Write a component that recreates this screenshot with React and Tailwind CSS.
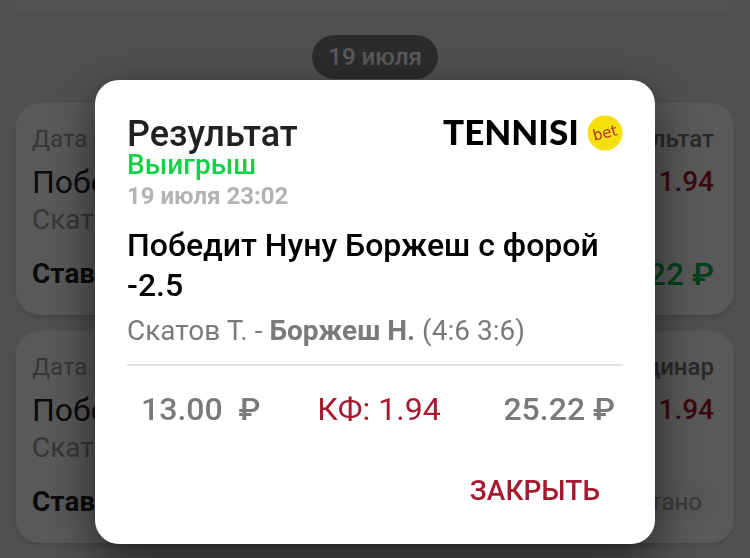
const BETS = [
  {
    id: 1,
    title: "Победит Нуну",
    players: "Скатов Т.",
    kind: "Результат",
    odds: "1.94",
    footer: <span className="pr-1 text-[32px] font-medium text-[#00b84c]">25.22 ₽</span>,
  },
  {
    id: 2,
    title: "Победит Нуну",
    players: "Скатов Т.",
    kind: "Ординар",
    odds: "1.94",
    footer: <span className="mr-1 rounded-lg bg-[#fafafa] px-3 text-2xl leading-8 text-[#9e9e9e]">Рассчитано</span>,
  },
];

export default function App() {
  return (
    <div className="h-screen overflow-hidden bg-[#e6e6e6] font-['Roboto',sans-serif]">
      <main className="px-4">
        <div className="h-3 bg-[#ebebeb]" />
        <div className="mt-[23px] flex justify-center">
          <span className="rounded-full bg-[#7d7d7d] px-4 text-2xl font-medium leading-[44px] text-white">19 июля</span>
        </div>
        <div className="mt-6 space-y-4">
          {BETS.map((b) => <BetCard key={b.id} bet={b} />)}
        </div>
      </main>

      <div className="fixed inset-0 flex items-start justify-center bg-black/65 pt-20">
        <ResultDialog />
      </div>
    </div>
  );
}

function BetCard({ bet }) {
  return (
    <article className="rounded-3xl bg-white px-4 pt-5 pb-[21px] shadow-md">
      <div className="flex justify-between text-2xl text-[#9e9e9e]">
        <span>Дата ставки</span>
        <span className="pr-1 font-medium text-[#757575]">{bet.kind}</span>
      </div>
      <div className="mt-[7px] flex items-center justify-between leading-10">
        <span className="text-[32px] text-[#212121]">{bet.title}</span>
        <span className="pr-1 text-[28px] font-medium text-[#a6192e]">{bet.odds}</span>
      </div>
      <div className="text-[28px] leading-9 text-[#9e9e9e]">{bet.players}</div>
      <div className="mt-4 flex items-center justify-between leading-10">
        <span className="text-[28px] font-bold text-[#212121]">Ставка</span>
        {bet.footer}
      </div>
    </article>
  );
}

function ResultDialog() {
  return (
    <section
      role="dialog"
      aria-modal="true"
      aria-labelledby="result-title"
      className="w-[560px] max-w-full rounded-3xl bg-white px-8 pt-[38px] pb-[35px] shadow-[0_16px_48px_rgba(0,0,0,0.6)]"
    >
      <header className="flex items-start justify-between">
        <div>
          <h1 id="result-title" className="text-4xl/8 font-medium text-[#212121]">Результат</h1>
          <p className="text-[28px] font-medium leading-[30px] text-[#12d146]">Выигрыш</p>
          <p className="text-2xl/8 font-bold text-[#b3b3b3]">19 июля 23:02</p>
        </div>
        <Logo />
      </header>

      <h2 className="mt-[13px] text-[32px] font-medium leading-10 text-black">Победит Нуну Боржеш с форой -2.5</h2>
      <p className="mt-1.5 text-[28px] leading-10 text-[#7a7a7a]">
        Скатов Т. - <b className="font-bold">Боржеш Н.</b> (4:6 3:6)
      </p>

      <hr className="mt-[13px] border-t-2 border-[#e0e0e0]" />

      <div className="mt-[23px] flex justify-between pr-2 pl-3.5 text-[32px] leading-10 text-[#7a7a7a]">
        <span className="whitespace-pre font-medium">13.00  ₽</span>
        <span className="pr-1.5 text-[#a6192e]">КФ: 1.94</span>
        <span className="font-medium">25.22 ₽</span>
      </div>

      <div className="mt-11 flex justify-end pr-[23px]">
        <button type="button" className="text-[28px] font-medium leading-9 text-[#a6192e]">ЗАКРЫТЬ</button>
      </div>
    </section>
  );
}

function Logo() {
  return (
    <svg className="-mt-2" width="184" height="52" viewBox="0 0 184 52" role="img" aria-label="TENNISI bet">
      <text x="4" y="35" className="fill-black font-['Lato',sans-serif] text-[35px] font-black">TENNISI</text>
      <circle cx="166" cy="23" r="17.5" fill="#f5df0c" />
      <text x="166" y="28" textAnchor="middle" transform="rotate(-14 166 23)" className="fill-[#a8372a] font-['DejaVu_Sans',sans-serif] text-[15px]">bet</text>
    </svg>
  );
}
